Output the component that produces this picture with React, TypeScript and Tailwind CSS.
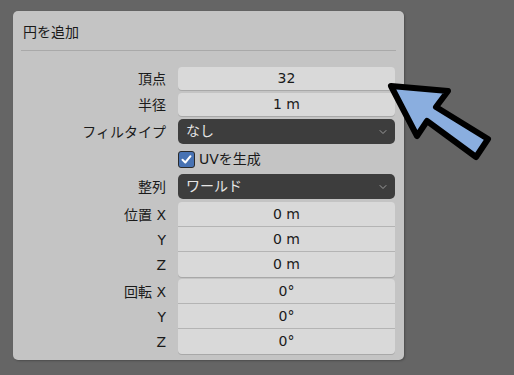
import { ChevronDown } from 'lucide-react';

const font = { fontFamily: '"DejaVu Sans", "Noto Sans CJK JP", sans-serif' };

const Label = ({ text }: { text: string }) => (
  <div className="w-[165px] shrink-0 pr-[12px] text-right text-[14px] leading-none text-[#1a1a1a]">{text}</div>
);

const NumField = ({ label, value }: { label: string; value: string }) => (
  <div className="flex h-[23px] items-center">
    <Label text={label} />
    <div className="flex h-full w-[217px] items-center justify-center rounded-[4px] bg-[#d9d9d9] text-[14px] text-[#1a1a1a] shadow-[0_1px_0_#a8a8a8]">
      {value}
    </div>
  </div>
);

const Dropdown = ({ label, value }: { label: string; value: string }) => (
  <div className="flex h-[25px] items-center">
    <Label text={label} />
    <div className="flex h-full w-[217px] items-center justify-between rounded-[5px] bg-[#3d3d3d] pl-[8px] pr-[6px] text-[14px] text-[#e6e6e6]">
      <span>{value}</span>
      <ChevronDown className="h-[12px] w-[12px] text-[#9a9a9a]" strokeWidth={2} />
    </div>
  </div>
);

const Group = ({ label, values }: { label: string; values: string[] }) => (
  <div className="flex">
    <div className="flex w-[165px] shrink-0 flex-col">
      {['X', 'Y', 'Z'].map((axis, i) => (
        <div key={axis} className="flex h-[25px] items-center justify-end pr-[12px] text-[14px] leading-none text-[#1a1a1a]">
          {i === 0 ? `${label} ${axis}` : axis}
        </div>
      ))}
    </div>
    <div className="flex w-[217px] flex-col overflow-hidden rounded-[4px] bg-[#d9d9d9] shadow-[0_1px_0_#a8a8a8]">
      {values.map((v, i) => (
        <div
          key={i}
          className={`flex h-[25px] items-center justify-center text-[14px] text-[#1a1a1a] ${i < 2 ? 'border-b border-[#b4b4b4]' : ''}`}
        >
          {v}
        </div>
      ))}
    </div>
  </div>
);

const Arrow = () => (
  <svg className="absolute left-[380px] top-[76px]" width="120" height="90" viewBox="380 76 120 90">
    <polygon
      points="391,86 448,91 436,107 488,139 476,157 427,121 417,136"
      fill="#8aaedf"
      stroke="#000"
      strokeWidth="6"
      strokeLinejoin="round"
    />
  </svg>
);

export default function App() {
  return (
    <div className="relative h-[375px] w-[514px] overflow-hidden bg-[#656565]" style={font}>
      <div className="ml-[13px] mt-[11px] h-[349px] w-[391px] rounded-[5px] bg-[#c4c4c4] shadow-[1px_1px_2px_rgba(0,0,0,0.25)]">
        <div className="px-[10px] pt-[12px] text-[14px] leading-[18px] text-[#1a1a1a]">円を追加</div>
        <div className="mx-[8px] mt-[9px] h-px bg-[#a9a9a9]" />
        <div className="mt-[16px] flex flex-col gap-[3px]">
          <NumField label="頂点" value="32" />
          <NumField label="半径" value="1 m" />
          <Dropdown label="フィルタイプ" value="なし" />
          <div className="flex h-[24px] items-center">
            <div className="w-[165px] shrink-0" />
            <div className="flex h-[17px] w-[17px] items-center justify-center rounded-[3px] border border-[#2a2a2a] bg-[#4772b3]">
              <svg width="13" height="13" viewBox="0 0 13 13">
                <path d="M2.5 6.8 L5.3 9.5 L10.5 3.2" fill="none" stroke="#fff" strokeWidth="2" strokeLinecap="round" strokeLinejoin="round" />
              </svg>
            </div>
            <span className="ml-[4px] text-[14px] text-[#1a1a1a]">UVを生成</span>
          </div>
          <Dropdown label="整列" value="ワールド" />
          <div className="flex flex-col gap-[2px]">
            <Group label="位置" values={['0 m', '0 m', '0 m']} />
            <Group label="回転" values={['0°', '0°', '0°']} />
          </div>
        </div>
      </div>
      <Arrow />
    </div>
  );
}
